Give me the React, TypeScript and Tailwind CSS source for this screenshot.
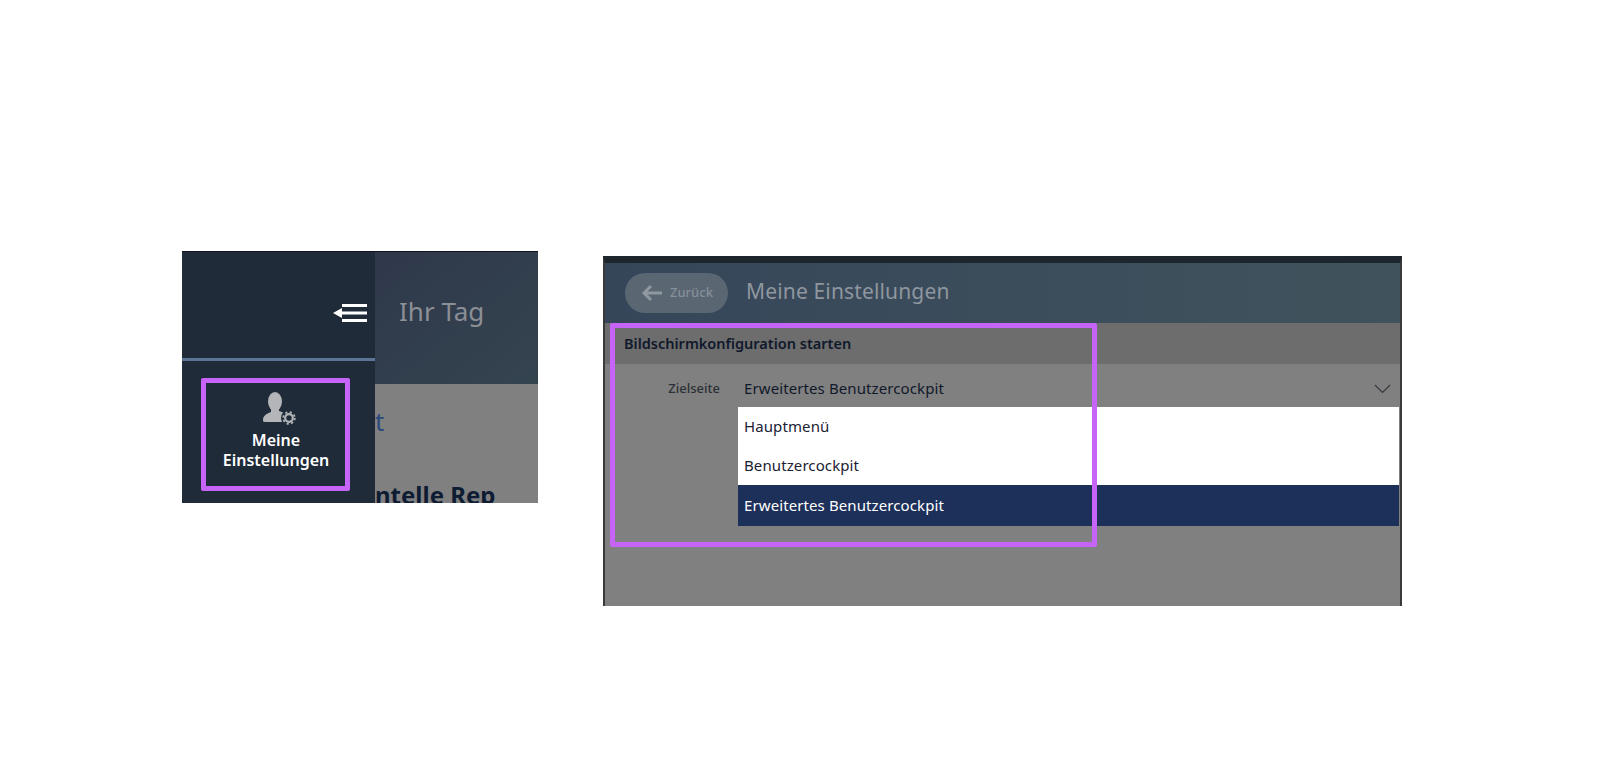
const font = "font-['Noto_Sans',sans-serif]";

function UserGearIcon() {
  return (
    <svg width="33" height="33" viewBox="0 0 33 33" fill="none">
      <ellipse cx="12" cy="9.5" rx="7" ry="9.5" fill="#b3b5b9" />
      <path d="M8 15h8v4c3 1 6 2 7 4v7H2c-2 0-2-1-2-2 0-4 3-6 8-8v-5z" fill="#b3b5b9" />
      <circle cx="26" cy="26" r="8" fill="#1f2b38" />
      <circle cx="26" cy="26" r="3.8" stroke="#b3b5b9" strokeWidth="2.2" />
      <circle cx="26" cy="26" r="5.8" stroke="#b3b5b9" strokeWidth="1.8" strokeDasharray="2.2 2.35" />
    </svg>
  );
}

function CollapseIcon() {
  return (
    <svg width="34" height="18" viewBox="0 0 34 18" fill="none">
      <path d="M9 1.5h25M4 9h30M9 16.5h25" stroke="#fff" strokeWidth="3" />
      <path d="M0 9l9-5v10z" fill="#fff" />
    </svg>
  );
}

function LeftPanel() {
  return (
    <div className="relative flex w-[356px] h-[252px] overflow-hidden border-t border-[#10151d] bg-[#808080]">
      {/* Sidebar */}
      <div className="flex w-[193px] shrink-0 flex-col bg-[#1f2b38]">
        <div className="flex h-[109px] shrink-0 items-center justify-end pr-[8px] pt-[15px] border-b-[3px] border-[#5b7596]">
          <CollapseIcon />
        </div>
        <div className="flex flex-col items-center pt-[31px] pr-[5px]">
          <div className="ml-[6px] h-[33px]">
            <UserGearIcon />
          </div>
          <div className="mt-[5px] text-center text-[16px] leading-[20px] font-semibold text-white">
            Meine
            <br />
            Einstellungen
          </div>
        </div>
      </div>

      {/* Page behind the menu */}
      <div className="flex min-w-0 flex-1 flex-col">
        <div className="flex h-[132px] shrink-0 items-center bg-gradient-to-br from-[#2f384b] to-[#34444f] pl-[24px] pb-[14px]">
          <span className="text-[26px] text-[#8b8f96]">Ihr Tag</span>
        </div>
        <div className="shrink-0 pt-[22px] text-[26px] leading-[30px] text-[#2a4a7c]">t</div>
        <div className="mt-[44px] shrink-0 text-[24px] leading-[30px] font-bold whitespace-nowrap text-[#0e1c33]">ntelle Rep</div>
      </div>

      {/* Highlight */}
      <div className="absolute left-[19px] top-[126px] h-[113px] w-[149px] rounded-[2px] border-[5px] border-[#c764f8]" />
    </div>
  );
}

function RightPanel() {
  return (
    <div className="relative ml-[65px] mt-[5px] flex h-[350px] w-[799px] flex-col overflow-hidden border-x-2 border-t-[7px] border-x-[#3a3a3a] border-t-[#1e262d] bg-[#808080]">
      {/* Header */}
      <div className="flex h-[60px] shrink-0 items-center bg-gradient-to-r from-[#36465a] to-[#40535c] pl-[20px]">
        <div className="flex h-[40px] w-[103px] items-center gap-[7px] rounded-full bg-[#5a6672] pl-[16px]">
          <svg width="22" height="18" viewBox="0 0 22 18" fill="none">
            <path d="M21 9H3M10 2L3 9l7 7" stroke="#8f979f" strokeWidth="3" />
          </svg>
          <span className="text-[13px] font-medium text-[#87909a]">Zurück</span>
        </div>
        <span className="ml-[18px] pb-[3px] text-[21px] tracking-[0.15px] text-[#8f969e]">Meine Einstellungen</span>
      </div>

      {/* Section title */}
      <div className="flex h-[41px] shrink-0 items-center bg-[#6d6d6d] pl-[19px] text-[14.5px] font-semibold text-[#10192b]">
        Bildschirmkonfiguration starten
      </div>

      {/* Select */}
      <div className="flex h-[43px] shrink-0 items-center pt-[6px]">
        <span className="w-[115px] text-right text-[13px] font-medium text-[#2b3036]">Zielseite</span>
        <span className="ml-[24px] text-[15px] tracking-[0.1px] text-[#10192b]">Erweitertes Benutzercockpit</span>
        <svg className="ml-auto mr-[9px]" width="17" height="10" viewBox="0 0 17 10" fill="none">
          <path d="M1 1l7.5 7.5L16 1" stroke="#33383d" strokeWidth="1.2" />
        </svg>
      </div>

      {/* Options */}
      <div className="ml-[133px] mr-[1px] flex shrink-0 flex-col text-[15px] tracking-[0.1px]">
        <div className="flex h-[39px] items-center bg-white px-[6px] text-[#1a2233]">Hauptmenü</div>
        <div className="flex h-[39px] items-center bg-white px-[6px] text-[#1a2233]">Benutzercockpit</div>
        <div className="flex h-[41px] items-center bg-[#1d3059] px-[6px] text-white">Erweitertes Benutzercockpit</div>
      </div>

      {/* Highlight */}
      <div className="absolute left-[5px] top-[60px] h-[224px] w-[487px] rounded-[2px] border-[5px] border-[#c764f8]" />
    </div>
  );
}

export default function App() {
  return (
    <div className={`${font} flex h-[766px] items-start bg-white pl-[182px] pt-[251px]`}>
      <LeftPanel />
      <RightPanel />
    </div>
  );
}
